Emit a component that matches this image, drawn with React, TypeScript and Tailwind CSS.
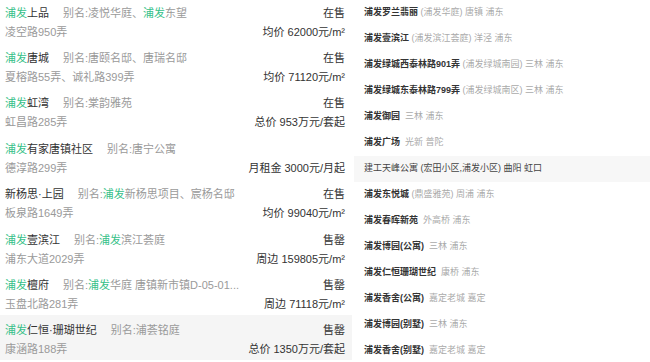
import React from "react";

type Left = {
  name: React.ReactNode;
  alias: React.ReactNode;
  addr: string;
  status?: string;
  price: string;
};

const G = ({ children }: { children: React.ReactNode }) => (
  <span className="text-[#35bf88]">{children}</span>
);

const left: Left[] = [
  { name: <><G>浦发</G>上品</>, alias: <>别名:凌悦华庭、<G>浦发</G>东望</>, addr: "凌空路950弄", status: "在售", price: "均价 62000元/m²" },
  { name: <><G>浦发</G>唐城</>, alias: <>别名:唐颐名邸、唐瑞名邸</>, addr: "夏榕路55弄、诚礼路399弄", status: "在售", price: "均价 71120元/m²" },
  { name: <><G>浦发</G>虹湾</>, alias: <>别名:棠韵雅苑</>, addr: "虹昌路285弄", status: "在售", price: "总价 953万元/套起" },
  { name: <><G>浦发</G>有家唐镇社区</>, alias: <>别名:唐宁公寓</>, addr: "德淳路299弄", status: "", price: "月租金 3000元/月起" },
  { name: <>新杨思·上园</>, alias: <>别名:<G>浦发</G>新杨思项目、宸杨名邸</>, addr: "板泉路1649弄", status: "在售", price: "均价 99040元/m²" },
  { name: <><G>浦发</G>壹滨江</>, alias: <>别名:<G>浦发</G>滨江荟庭</>, addr: "浦东大道2029弄", status: "售罄", price: "周边 159805元/m²" },
  { name: <><G>浦发</G>檀府</>, alias: <>别名:<G>浦发</G>华庭 唐镇新市镇D-05-01...</>, addr: "玉盘北路281弄", status: "售罄", price: "周边 71118元/m²" },
  { name: <><G>浦发</G>仁恒·珊瑚世纪</>, alias: <>别名:浦荟铭庭</>, addr: "康涵路188弄", status: "售罄", price: "总价 1350万元/套起" },
];

const right: { name: string; rest: string; hl?: boolean }[] = [
  { name: "浦发罗兰翡丽", rest: "\u00a0(浦发华庭) 唐镇 浦东" },
  { name: "浦发壹滨江", rest: "\u00a0(浦发滨江荟庭) 洋泾 浦东" },
  { name: "浦发绿城西泰林路901弄", rest: "\u00a0(浦发绿城南园) 三林 浦东" },
  { name: "浦发绿城东泰林路799弄", rest: "\u00a0(浦发绿城南区) 三林 浦东" },
  { name: "浦发御园", rest: "\u00a0\u00a0三林 浦东" },
  { name: "浦发广场", rest: "\u00a0\u00a0光新 普陀" },
  { name: "建工天峰公寓", rest: "\u00a0(宏田小区,浦发小区) 曲阳 虹口", hl: true },
  { name: "浦发东悦城", rest: "\u00a0(鼎盛雅苑) 周浦 浦东" },
  { name: "浦发春晖新苑", rest: "\u00a0\u00a0外高桥 浦东" },
  { name: "浦发博园(公寓)", rest: "\u00a0\u00a0三林 浦东" },
  { name: "浦发仁恒珊瑚世纪", rest: "\u00a0\u00a0康桥 浦东" },
  { name: "浦发香舍(公寓)", rest: "\u00a0\u00a0嘉定老城 嘉定" },
  { name: "浦发博园(别墅)", rest: "\u00a0\u00a0三林 浦东" },
  { name: "浦发香舍(别墅)", rest: "\u00a0\u00a0嘉定老城 嘉定" },
];

export default function App() {
  return (
    <div
      className="w-[650px] h-[362px] overflow-hidden bg-white flex"
      style={{ fontFamily: '"Liberation Sans", "Noto Sans CJK SC", sans-serif' }}
    >
      <div className="w-[352px] flex flex-col mt-[-3px]">
        {left.map((r, i) => (
          <div
            key={i}
            className={`h-[45.43px] shrink-0 pl-[5px] pr-[7px] pt-[6.5px] text-[11px] leading-[19px] ${i === 7 ? "bg-[#f5f5f5]" : ""}`}
          >
            <div className="flex justify-between">
              <div className="flex whitespace-nowrap">
                <span className="text-[#333]">{r.name}</span>
                <span className="ml-[14px] text-[#9a9a9a]">{r.alias}</span>
              </div>
              <span className="text-[#333]">{r.status}</span>
            </div>
            <div className="flex justify-between">
              <span className="text-[#9a9a9a]">{r.addr}</span>
              <span className="text-[#333]">{r.price}</span>
            </div>
          </div>
        ))}
      </div>
      <div className="flex-1 ml-[2px] flex flex-col">
        {right.map((r, i) => (
          <div
            key={i}
            className={`h-[26px] shrink-0 flex items-center pl-[10px] text-[9px] whitespace-nowrap ${r.hl ? "bg-[#f7f7f7]" : ""}`}
          >
            {r.hl ? (
              <span className="text-[#444]">
                {r.name}
                {r.rest}
              </span>
            ) : (
              <span>
                <span className="text-[#333] font-bold">{r.name}</span>
                <span className="text-[#aaa]">{r.rest}</span>
              </span>
            )}
          </div>
        ))}
      </div>
    </div>
  );
}
